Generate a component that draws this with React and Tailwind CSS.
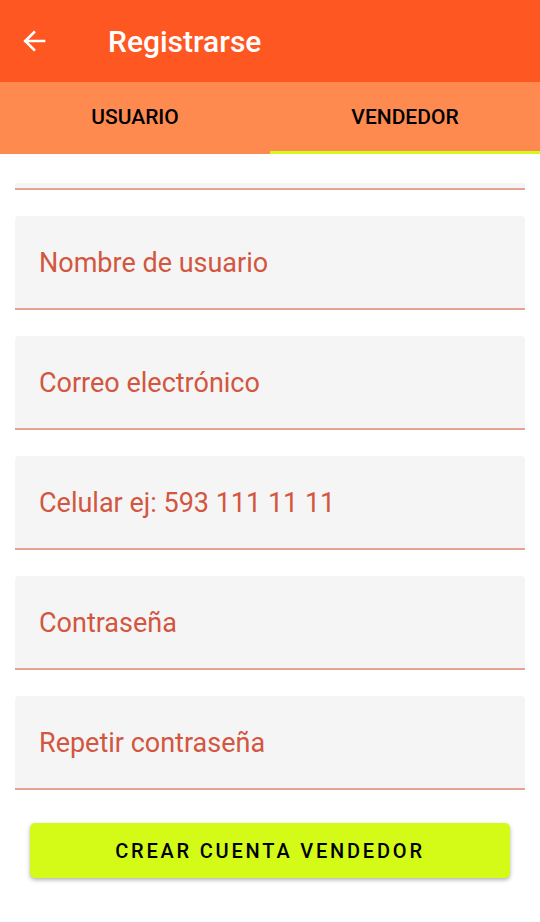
import React from "react";

const fields = [
  "Nombre de usuario",
  "Correo electrónico",
  "Celular ej: 593 111 11 11",
  "Contraseña",
  "Repetir contraseña",
];

const Field = ({ label }) => (
  <div className="h-[94px] flex flex-col">
    <div className="flex-1 bg-[#f5f5f5] rounded-t-[4px] flex items-center px-[24px]">
      <span className="text-[27px] text-[#d3563f] mt-[2px]">{label}</span>
    </div>
    <div className="h-[2px] bg-[#e9a292]" />
  </div>
);

const App = () => {
  return (
    <div className="w-[540px] h-[922px] bg-white overflow-hidden flex flex-col font-['Roboto',sans-serif]">
      <div className="h-[82px] bg-[#ff5722] flex items-center text-white shrink-0">
        <button className="w-[68px] flex items-center justify-center">
          <svg width="30" height="30" viewBox="0 0 24 24" fill="none" stroke="white" strokeWidth="2.1" strokeLinecap="square">
            <path d="M20 12H5M12 5l-7 7 7 7" />
          </svg>
        </button>
        <h1 className="ml-[40px] text-[30px] font-medium">Registrarse</h1>
      </div>

      <div className="h-[72px] bg-[#ff8a50] flex shrink-0">
        <div className="flex-1 flex items-center justify-center text-[21px] font-medium text-black">USUARIO</div>
        <div className="flex-1 flex flex-col text-[21px] font-medium text-black">
          <div className="flex-1 flex items-center justify-center pt-[3px]">VENDEDOR</div>
          <div className="h-[3px] bg-[#d4f81e]" />
        </div>
      </div>

      <div className="px-[15px] flex flex-col">
        <div className="h-[36px] flex flex-col justify-end">
          <div className="h-[5px] bg-[#f5f5f5]" />
          <div className="h-[2px] bg-[#e9a292]" />
        </div>
        <div className="flex flex-col gap-[26px] mt-[26px]">
          {fields.map((f) => (
            <Field key={f} label={f} />
          ))}
        </div>
        <button className="mt-[33px] mx-[15px] h-[55px] bg-[#d4fb17] rounded-[5px] shadow-[0_2px_4px_rgba(0,0,0,0.3)] text-[20px] font-medium tracking-[2.8px] text-black">
          CREAR CUENTA VENDEDOR
        </button>
      </div>
    </div>
  );
};

export default App;
